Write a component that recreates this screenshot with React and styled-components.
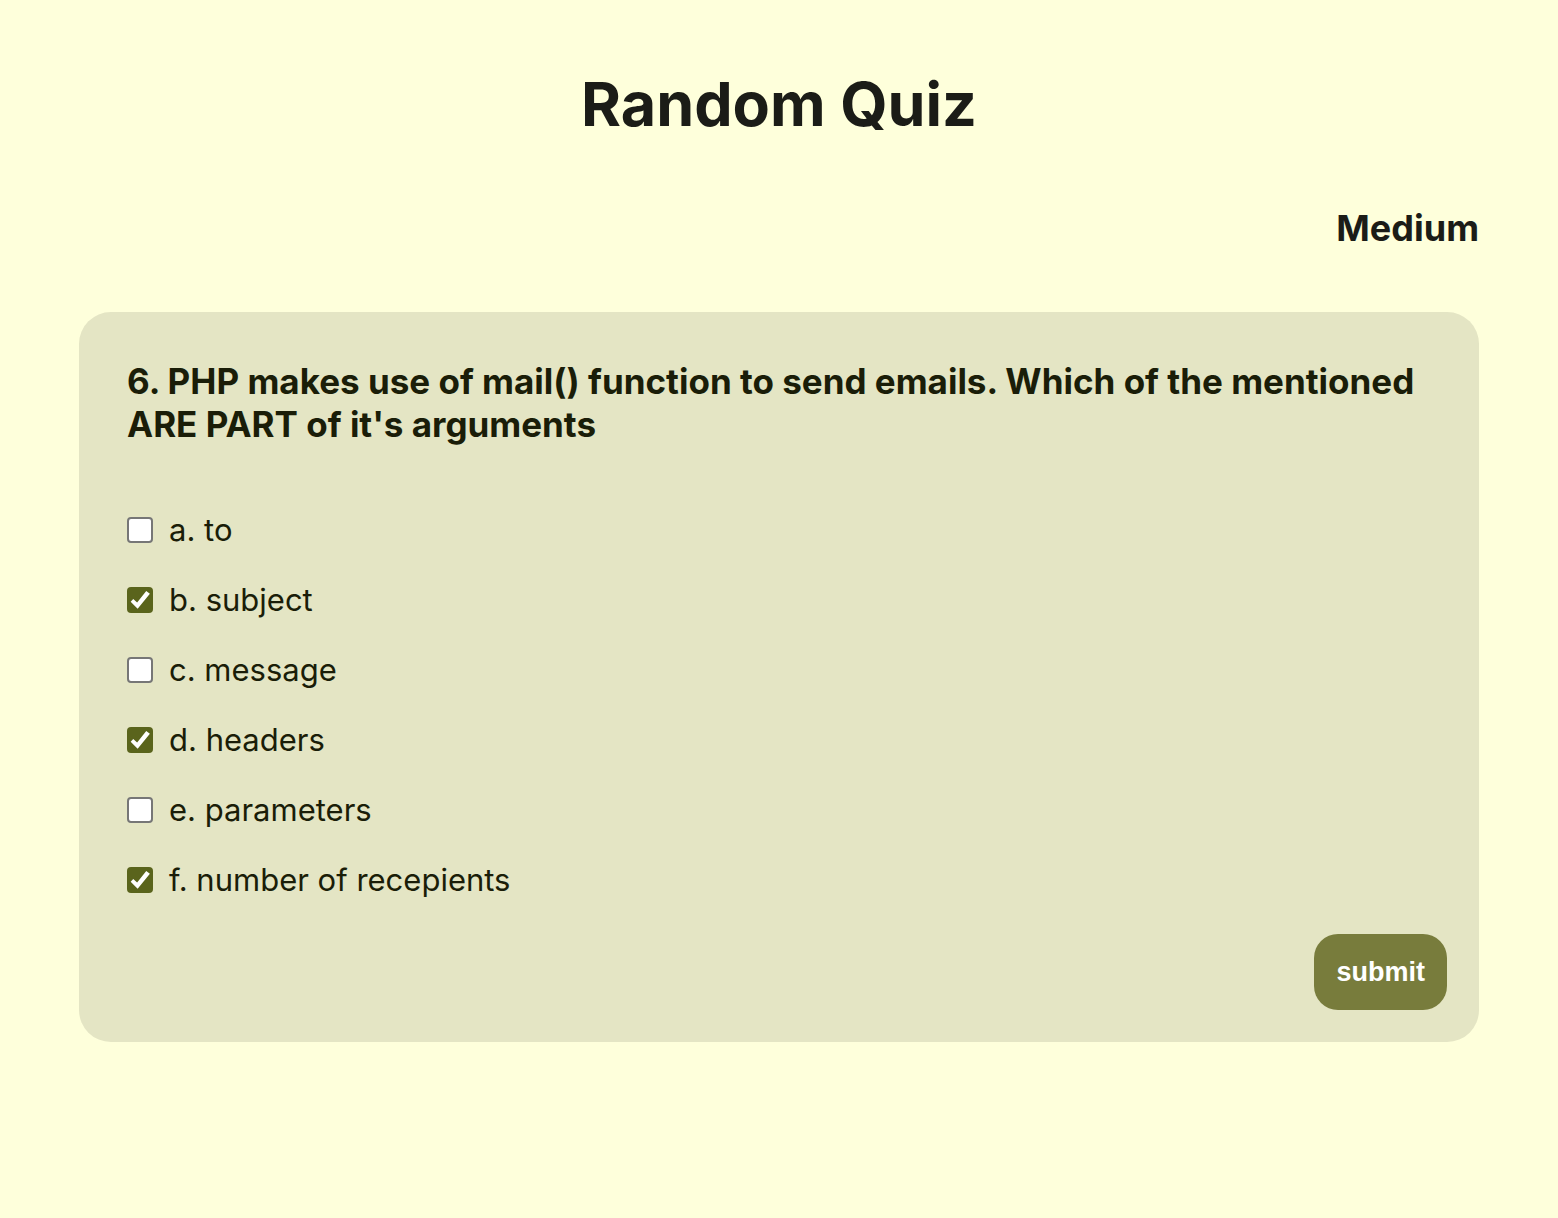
import React, { useState } from "react";
import styled, { createGlobalStyle } from "styled-components";

const GlobalStyle = createGlobalStyle`
  *, *::before, *::after { box-sizing: border-box; }
  body {
    margin: 0;
    background: #feffdb;
    color: #1b1c17;
    font-family: Inter, "Liberation Sans", sans-serif;
  }
`;

const Page = styled.main`
  display: flex;
  flex-direction: column;
  min-height: 100vh;
  padding: 64px 79px;
`;

const Title = styled.h1`
  margin: 0;
  font-size: 61px;
  font-weight: 700;
  line-height: 80px;
  text-align: center;
`;

const Level = styled.p`
  margin: 60px 0;
  font-size: 36px;
  font-weight: 700;
  line-height: 48px;
  text-align: right;
`;

const Card = styled.form`
  display: flex;
  flex-direction: column;
  padding: 48px 32px 32px 48px;
  border-radius: 32px;
  background: #e4e5c4;
`;

const Question = styled.h2`
  margin: 0 0 64px;
  font-size: 35px;
  font-weight: 700;
  line-height: 43px;
  color: #1a1d08;
`;

const Options = styled.div`
  display: grid;
  gap: 30px;
  justify-items: start;
`;

const Option = styled.label`
  display: flex;
  align-items: center;
  gap: 16px;
  font-size: 31px;
  line-height: 40px;
  color: #1a1d08;
`;

const Checkbox = styled.input`
  appearance: none;
  display: grid;
  flex: none;
  width: 26px;
  height: 26px;
  margin: 0;
  border: 2px solid #767676;
  border-radius: 4px;
  background: #ffffff;

  &:checked {
    border: 0;
    background: #5a641c;
  }

  &:checked::before {
    content: "";
    background: #ffffff;
    clip-path: polygon(14% 57%, 24% 46%, 39% 60%, 74% 15%, 88% 26%, 41% 84%);
  }
`;

const Submit = styled.button`
  align-self: flex-end;
  margin-top: 34px;
  padding: 22px;
  border: 0;
  border-radius: 24px;
  background: #787c3c;
  color: #ffffff;
  font-family: "Liberation Sans", Arial, sans-serif;
  font-size: 27px;
  font-weight: 700;
  line-height: 32px;
`;

const options = [
  { id: "a", text: "to" },
  { id: "b", text: "subject" },
  { id: "c", text: "message" },
  { id: "d", text: "headers" },
  { id: "e", text: "parameters" },
  { id: "f", text: "number of recepients" },
];

export default function App() {
  const [selected, setSelected] = useState(["b", "d", "f"]);
  const toggle = (id) =>
    setSelected((now) =>
      now.includes(id) ? now.filter((item) => item !== id) : [...now, id]
    );

  return (
    <>
      <GlobalStyle />
      <Page>
        <Title>Random Quiz</Title>
        <Level>Medium</Level>
        <Card onSubmit={(event) => event.preventDefault()}>
          <Question>
            6. PHP makes use of mail() function to send emails. Which of the
            mentioned ARE PART of it's arguments
          </Question>
          <Options>
            {options.map(({ id, text }) => (
              <Option key={id} htmlFor={id}>
                <Checkbox
                  type="checkbox"
                  id={id}
                  checked={selected.includes(id)}
                  onChange={() => toggle(id)}
                />
                {`${id}. ${text}`}
              </Option>
            ))}
          </Options>
          <Submit type="submit">submit</Submit>
        </Card>
      </Page>
    </>
  );
}
